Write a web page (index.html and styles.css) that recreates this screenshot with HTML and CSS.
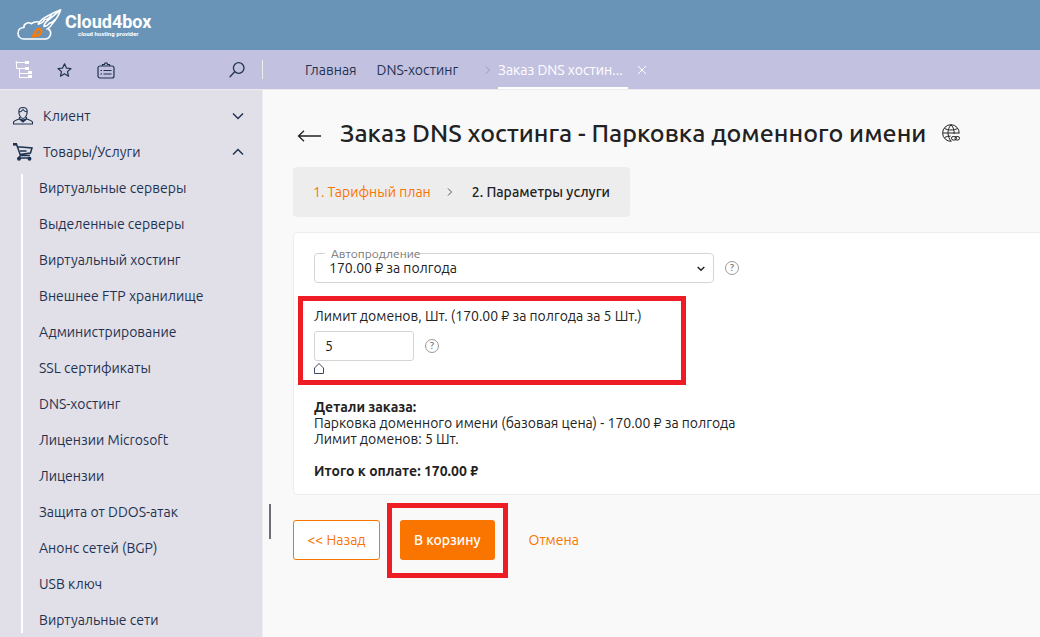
FILE: index.html
```html
<!DOCTYPE html>
<html lang="ru">
<head>
<meta charset="utf-8">
<meta name="viewport" content="width=device-width, initial-scale=1">
<title>Заказ DNS хостинга - Парковка доменного имени</title>
<link rel="stylesheet" href="styles.css">
</head>
<body class="page">
<header class="header">
  <a class="brand" href="#">
    <svg class="brand-mark" width="46" height="32" viewBox="0 0 46 32" fill="none" stroke="#fff" stroke-width="1.600" stroke-linejoin="round" stroke-linecap="round">
      <path d="M32.500 20c2 1.500 2.500 3.500 2 5.500-.8 2.800-2.500 4.500-5.500 4.500H8c-3.800 0-6-2.600-6-5.800 0-3.700 2.800-5.700 6-5.700-.8-3.500 4-6 7.500-3.800 2-1.700 4.500-2.200 7.500-1.700"/>
      <path d="M22.500 15c1.500-4 6-6.500 10-8.500 4-2.400 8-4 12-5.500-1.500 5-4.500 9.500-8 13.500-1 2-3 4.500-5.500 5.500"/>
      <path d="M22.500 15c3-.5 5-2 6-4.500M28.500 10.500c3 .2 5.500-2 7-5M28 17.500c0-3 2-5 5-7 3-2.500 7-6 11.500-9.500M28 17.500c3-.5 4.500-1.500 5.500-3.500 2.500 0 4-1.500 5-3"/>
      <path d="M17 27.500l2.800-5c1.500-2.300 3.700-3 5-1.800 1 1.300.2 4-2 5.200z" stroke="#f57c0a" stroke-width="2.600"/>
    </svg>
    <span class="brand-text"><span class="brand-name">Cloud4box</span><span class="brand-sub">cloud hosting provider</span></span>
  </a>
</header>
<div class="toolbar">
  <div class="tools">
    <button class="tool tool-active" aria-label="Меню"><svg width="18" height="18" viewBox="0 0 18 18" fill="none" stroke="currentColor"><path d="M1.500 0v7.500H11M.5 1.500H11M4.500 8v8.500H14M4.500 12.500H14"/><path d="M10 0h4v3h-4zM10 6h4v3h-4zM13 10h4v3h-4zM13 14h4v3h-4z" fill="currentColor" stroke="none"/></svg></button>
    <button class="tool" aria-label="Избранное"><svg width="16" height="16" viewBox="0 0 16 16" fill="none" stroke="currentColor" stroke-width="1.200" stroke-linejoin="round"><path d="M7.500 1.800l1.900 4.300 4.600.4-3.500 3.100 1 4.600-4-2.400-4 2.400 1-4.600L1 6.500l4.600-.4z"/></svg></button>
    <button class="tool" aria-label="Список"><svg width="18" height="18" viewBox="0 0 18 18" fill="none" stroke="currentColor" stroke-width="1.200"><rect x="1" y="5" width="16" height="12" rx="2"/><path d="M5.500 5V3.500h2C7.500 1.200 10.500 1.200 10.500 3.500h2V5M6.500 9.500h8M6.500 13h8M3.500 9.500H5M3.500 13H5"/></svg></button>
    <button class="tool tool-search" aria-label="Поиск"><svg width="16" height="16" viewBox="0 0 16 16" fill="none" stroke="currentColor" stroke-width="1.300" stroke-linecap="round"><circle cx="9.700" cy="6" r="5.300"/><path d="M5.700 9.800L1 14.700"/></svg></button>
  </div>
  <nav class="tabs">
    <a class="tab" href="#">Главная</a>
    <a class="tab tab-parent" href="#">DNS-хостинг</a>
    <svg class="tab-sep" width="6" height="8" viewBox="0 0 6 8" fill="none" stroke="#9b9bb0"><path d="M1 .5L4.500 4 1 7.500"/></svg>
    <a class="tab tab-current" href="#">Заказ DNS хостин...</a>
    <button class="tab-close" aria-label="Закрыть"><svg width="10" height="10" viewBox="0 0 10 10" fill="none" stroke="#fff"><path d="M1 1l8 8M9 1L1 9"/></svg></button>
  </nav>
</div>
<div class="body">
  <aside class="sidebar">
    <button class="group">
      <svg width="22" height="20" viewBox="0 0 22 20" fill="none" stroke="currentColor" stroke-width="1.100"><path d="M1.500 18v-2c1-2 3.500-2 6-3.200V11M20.500 18v-2c-1-2-3.500-2-6-3.200V11M1 18h20"/><path d="M6.800 5.500C6.800 3 8 1.500 11 1.500s4.200 1.500 4.200 4-1.500 7-4.200 7-4.200-4.500-4.200-7zM7 6c2 0 3-1 4-2.500C12 5 13 5.500 15 6"/><path d="M7.500 13l3.500 3 3.500-3-3.500 1z" fill="currentColor"/></svg>
      <span class="group-name">Клиент</span>
      <svg class="chevron" width="12" height="8" viewBox="0 0 12 8" fill="none" stroke="currentColor" stroke-width="1.500"><path d="M1 1.500l5 5 5-5"/></svg>
    </button>
    <button class="group">
      <svg width="22" height="20" viewBox="0 0 22 20" fill="none" stroke="currentColor" stroke-width="1.500"><path d="M1 2.300h3.500L8.500 13.500H18M5.500 4.800L20 6l-1.500 5-10.500 1.500M8 9H14.500M8.500 13.500L6.500 16H19"/><path d="M1 2.300h4" stroke-width="2.600"/><circle cx="7" cy="16.800" r="1.200" fill="currentColor"/><circle cx="17.500" cy="16.800" r="1.200" fill="currentColor"/></svg>
      <span class="group-name">Товары/Услуги</span>
      <svg class="chevron" width="12" height="8" viewBox="0 0 12 8" fill="none" stroke="currentColor" stroke-width="1.500"><path d="M1 6.500l5-5 5 5"/></svg>
    </button>
    <nav class="submenu">
      <a href="#">Виртуальные серверы</a>
      <a href="#">Выделенные серверы</a>
      <a href="#">Виртуальный хостинг</a>
      <a href="#">Внешнее FTP хранилище</a>
      <a href="#">Администрирование</a>
      <a href="#">SSL сертификаты</a>
      <a href="#">DNS-хостинг</a>
      <a href="#">Лицензии Microsoft</a>
      <a href="#">Лицензии</a>
      <a href="#">Защита от DDOS-атак</a>
      <a href="#">Анонс сетей (BGP)</a>
      <a href="#">USB ключ</a>
      <a href="#">Виртуальные сети</a>
    </nav>
    <div class="resize-handle"></div>
  </aside>
  <main class="main">
    <div class="title-row">
      <button class="back" aria-label="Назад"><svg width="24" height="12" viewBox="0 0 24 12" fill="none" stroke="currentColor" stroke-width="1.300"><path d="M24 6H1.500M7 .8L1.500 6 7 11.200"/></svg></button>
      <h1 class="title">Заказ DNS хостинга - Парковка доменного имени</h1>
      <button class="globe" aria-label="Ссылка"><svg width="18" height="18" viewBox="0 0 18 18" fill="none" stroke="currentColor"><path d="M9.500 17.300A8.300 8.300 0 1 1 17.200 9.500M9 17C5 12.500 5 5 9 .8M9 .8c2.500 2.500 3.500 6 3 9.200M2.500 4.500c4 2 9 2 13 0M.8 9H17M2.500 13.500c2-1 4-1.300 6-1.300"/><rect x="9.500" y="12.500" width="5" height="3.500" rx="1.700"/><rect x="13" y="12.500" width="4.500" height="3.500" rx="1.700"/></svg></button>
    </div>
    <ol class="steps">
      <li><a class="step-link" href="#">1. Тарифный план</a></li>
      <li class="step-sep"><svg width="6" height="8" viewBox="0 0 6 8" fill="none" stroke="#555"><path d="M1 .5L4.500 4 1 7.500"/></svg></li>
      <li class="step-current">2. Параметры услуги</li>
    </ol>
    <form class="order" onsubmit="return false">
      <section class="card">
        <div class="row">
          <div class="select-box">
            <label class="select-label" for="renew">Автопродление</label>
            <select class="select" id="renew"><option>170.00 ₽ за полгода</option></select>
            <svg class="select-arrow" width="8" height="6" viewBox="0 0 8 6" fill="none" stroke="#222" stroke-width="1.500"><path d="M.7 1L4 4.300 7.300 1"/></svg>
          </div>
          <button class="help" aria-label="Справка">?</button>
        </div>
        <div class="limit">
          <label class="limit-label" for="limit">Лимит доменов, Шт. (170.00 ₽ за полгода за 5 Шт.)</label>
          <div class="row">
            <input class="number" id="limit" type="text" value="5">
            <button class="help" aria-label="Справка">?</button>
          </div>
          <input class="slider" type="range" min="5" max="50" value="5" aria-label="Лимит доменов">
          <div class="mark mark-limit"></div>
        </div>
        <div class="details">
          <p><strong>Детали заказа:</strong></p>
          <p>Парковка доменного имени (базовая цена) - 170.00 ₽ за полгода</p>
          <p>Лимит доменов: 5 Шт.</p>
          <p class="total"><strong>Итого к оплате: 170.00 ₽</strong></p>
        </div>
      </section>
      <div class="actions">
        <button class="btn btn-outline">&lt;&lt; Назад</button>
        <div class="cart"><button class="btn btn-primary">В корзину</button><div class="mark mark-cart"></div></div>
        <button class="btn btn-text">Отмена</button>
      </div>
    </form>
  </main>
</div>
</body>
</html>
```
FILE: styles.css
```css
* { box-sizing: border-box; }
.page {
  margin: 0;
  height: 100vh;
  display: flex;
  flex-direction: column;
  overflow: hidden;
  background: #f9f9f9;
  color: #222;
  font: 14px/16px "Ubuntu", "Noto Sans", "Open Sans", sans-serif;
}
button, input, select { font: inherit; color: inherit; }
button { border: 0; padding: 0; background: none; cursor: pointer; }
a { color: inherit; text-decoration: none; }
svg { display: block; flex: none; }
p { margin: 0; }

.header { flex: none; height: 50px; padding: 9px 16px; background: #6a94b7; }
.brand { display: flex; gap: 3px; color: #fff; width: max-content; }
.brand-text { display: flex; flex-direction: column; align-items: center; padding-top: 4px; }
.brand-name { font: 700 18px/18px Roboto, sans-serif; }
.brand-sub { font: 700 6px/6px Roboto, sans-serif; }

.toolbar { flex: none; display: flex; height: 40px; background: #c3c1e0; border-bottom: 1px solid #ececf0; color: #1f3350; }
.tools { flex: none; display: flex; align-items: center; gap: 24px; width: 263px; height: 19px; margin-top: 10px; padding: 0 17px 0 15px; border-right: 1px solid #eee; }
.tool-active { color: #fff; }
.tool-search { margin-left: auto; }
.tabs { display: flex; align-items: stretch; padding-left: 42px; line-height: 41px; }
.tab-parent { margin-left: 20px; }
.tab-sep { align-self: center; margin: 0 7px 0 27px; }
.tab-current { min-width: 130px; height: 39px; white-space: nowrap; color: #fff; border-bottom: 2px solid #fff; }
.tab-close { margin-left: 9px; }

.body { flex: 1; display: flex; min-height: 0; }
.sidebar { position: relative; flex: none; width: 263px; padding-top: 8px; background: #e1dfe8; border-right: 1px solid #eee; color: #1f3350; }
.group { display: flex; align-items: center; width: 100%; height: 36px; padding: 0 18px 0 12px; text-align: left; }
.group-name { flex: 1; padding-left: 9px; }
.submenu { display: flex; flex-direction: column; gap: 20px; margin: 4px 0 0 21px; padding: 6px 0 5px 16px; border-left: 2px solid #fff; }
.resize-handle { position: absolute; left: 269px; top: 414px; width: 2px; height: 35px; background: #6d7072; }

.main { flex: 1; min-width: 0; padding: 28px 0 0 30px; }
.title-row { display: flex; align-items: center; height: 30px; }
.back { margin: 6px 19px 0 4px; }
.title { margin: 0; font-size: 25px; line-height: 30px; font-weight: 550; white-space: nowrap; }
.globe { margin-left: 16px; }
.steps { display: flex; align-items: center; width: max-content; height: 50px; margin: 19px 0 15px; padding: 0 20px; list-style: none; background: #ededed; border-radius: 4px; }
.step-sep { margin: 0 19px 0 16px; }
.step-link { color: #f97500; }
.step-current { font-weight: 500; }

.card { padding: 20px 20px 15px; background: #fff; border: 1px solid #ececec; border-right: 0; border-radius: 5px 0 0 5px; }
.row { display: flex; align-items: center; gap: 11px; }
.select-box { position: relative; width: 400px; }
.select { display: block; width: 100%; height: 30px; padding: 0 14px; appearance: none; background: #fff; border: 1px solid #d4d4d4; border-radius: 4px; }
.select-label { position: absolute; left: 11px; top: -5px; height: 11px; padding-left: 6px; background: #fff; color: #777; font-size: 12px; line-height: 11px; }
.select-arrow { position: absolute; right: 9px; top: 13px; }
.help { width: 14px; height: 14px; border: 1px solid #999; border-radius: 50%; color: #777; font-size: 10px; font-weight: 500; line-height: 12px; text-align: center; }
.limit { position: relative; margin-top: 25px; }
.limit-label { display: block; margin-bottom: 7px; }
.number { width: 100px; height: 30px; padding: 0 10px; border: 1px solid #d4d4d4; border-radius: 3px; background: #fff; }
.slider { display: block; width: 100px; height: 12px; margin: 2px 0 0; appearance: none; background: none; }
.slider::-webkit-slider-thumb { appearance: none; width: 11px; height: 12px; background: url("data:image/svg+xml,%3Csvg xmlns='http://www.w3.org/2000/svg' width='11' height='12' fill='none' stroke='%233a4a60'%3E%3Cpath d='M.5 10.500V5l4.500-4.500L9.500 5v5.500z'/%3E%3C/svg%3E"); }
.mark { position: absolute; border: 5px solid #ee1c25; pointer-events: none; }
.mark-limit { left: -16px; top: -12px; width: 388px; height: 89px; }
.details { margin-top: 24px; }
.total { margin-top: 16px; }

.actions { display: flex; align-items: center; gap: 20px; margin-top: 25px; }
.btn { height: 40px; padding: 0 13px; border: 1px solid transparent; border-radius: 3px; color: #f97500; }
.btn-outline { min-width: 87px; border-color: #f97500; background: #fff; }
.btn-primary { background: #f97500; color: #fff; font-weight: 500; }
.cart { position: relative; }
.mark-cart { inset: -17px -13px -18px; }
```
